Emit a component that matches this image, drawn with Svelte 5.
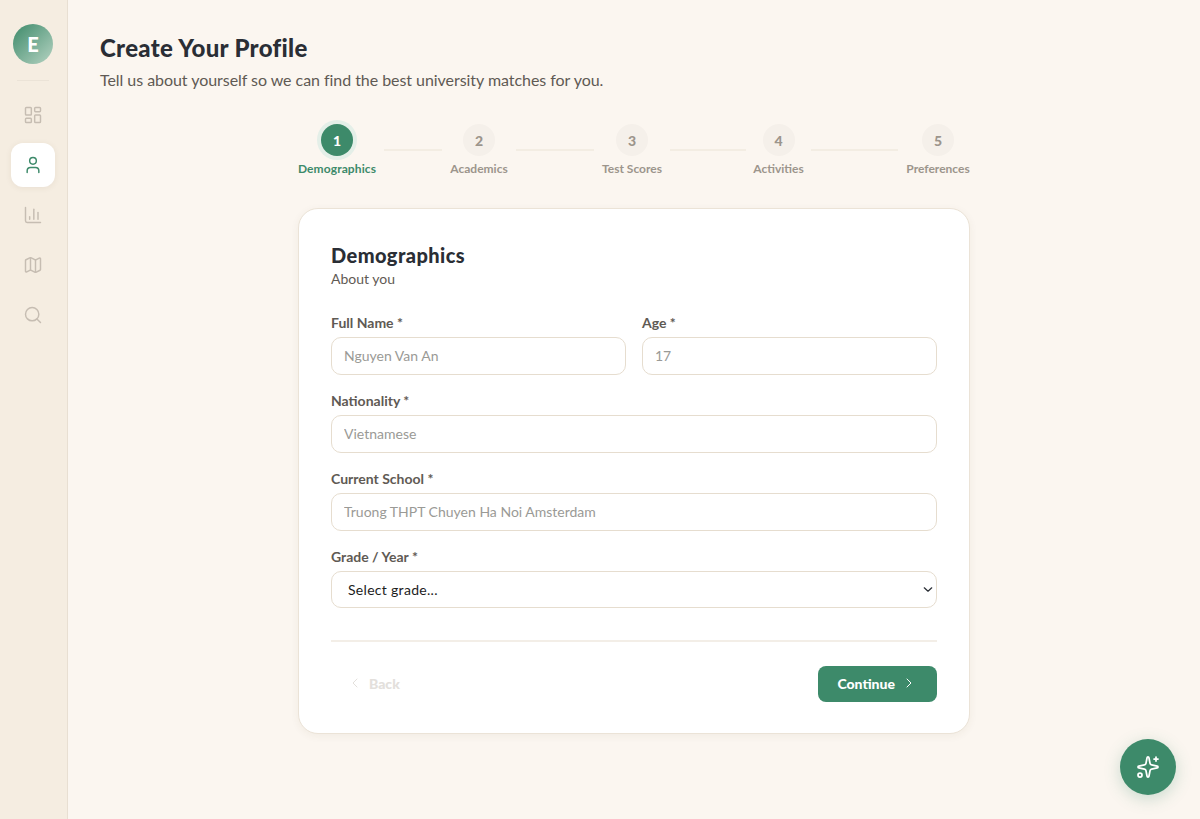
<script lang="ts">
	const steps = [
		{ n: 1, label: 'Demographics', active: true },
		{ n: 2, label: 'Academics' },
		{ n: 3, label: 'Test Scores' },
		{ n: 4, label: 'Activities' },
		{ n: 5, label: 'Preferences' }
	];
</script>

<div class="shell">
	<aside class="rail">
		<div class="avatar">E</div>
		<hr class="rail-sep" />
		<nav class="rail-nav">
			<a class="rail-item" href="#dash" aria-label="Dashboard">
				<svg viewBox="0 0 24 24"><rect x="3" y="3" width="7" height="9" rx="1" /><rect x="14" y="3" width="7" height="5" rx="1" /><rect x="14" y="12" width="7" height="9" rx="1" /><rect x="3" y="16" width="7" height="5" rx="1" /></svg>
			</a>
			<a class="rail-item rail-item--active" href="#profile" aria-label="Profile">
				<svg viewBox="0 0 24 24"><path d="M19 21v-2a4 4 0 0 0-4-4H9a4 4 0 0 0-4 4v2" /><circle cx="12" cy="7" r="4" /></svg>
			</a>
			<a class="rail-item" href="#stats" aria-label="Statistics">
				<svg viewBox="0 0 24 24"><path d="M3 3v16a2 2 0 0 0 2 2h16" /><path d="M18 17V9" /><path d="M13 17V5" /><path d="M8 17v-3" /></svg>
			</a>
			<a class="rail-item" href="#map" aria-label="Map">
				<svg viewBox="0 0 24 24"><path d="M14.106 5.553a2 2 0 0 0 1.788 0l3.659-1.83A1 1 0 0 1 21 4.619v12.764a1 1 0 0 1-.553.894l-4.553 2.277a2 2 0 0 1-1.788 0l-4.212-2.106a2 2 0 0 0-1.788 0l-3.659 1.83A1 1 0 0 1 3 19.381V6.618a1 1 0 0 1 .553-.894l4.553-2.277a2 2 0 0 1 1.788 0z" /><path d="M15 5.764v15" /><path d="M9 3.236v15" /></svg>
			</a>
			<a class="rail-item" href="#search" aria-label="Search">
				<svg viewBox="0 0 24 24"><circle cx="11" cy="11" r="8" /><path d="m21 21-4.3-4.3" /></svg>
			</a>
		</nav>
	</aside>

	<main class="main">
		<h1>Create Your Profile</h1>
		<p class="lede">Tell us about yourself so we can find the best university matches for you.</p>

		<div class="column">
			<ol class="stepper">
				{#each steps as step, i}
					{#if i > 0}
						<li class="step-line" aria-hidden="true"></li>
					{/if}
					<li class="step" class:step--active={step.active}>
						<span class="step-dot">{step.n}</span>
						<span class="step-label">{step.label}</span>
					</li>
				{/each}
			</ol>

			<form class="card">
				<h2>Demographics</h2>
				<p class="card-sub">About you</p>

				<div class="fields">
					<div class="row">
						<label class="field">
							<span>Full Name *</span>
							<input placeholder="Nguyen Van An" />
						</label>
						<label class="field">
							<span>Age *</span>
							<input placeholder="17" />
						</label>
					</div>
					<label class="field">
						<span>Nationality *</span>
						<input placeholder="Vietnamese" />
					</label>
					<label class="field">
						<span>Current School *</span>
						<input placeholder="Truong THPT Chuyen Ha Noi Amsterdam" />
					</label>
					<label class="field">
						<span>Grade / Year *</span>
						<div class="select-wrap">
							<select>
								<option>Select grade...</option>
							</select>
							<svg class="select-chevron" viewBox="0 0 12 8"><path d="M1.5 2l4.5 4 4.5-4" /></svg>
						</div>
					</label>
				</div>

				<div class="actions">
					<button type="button" class="btn btn--back" disabled>
						<svg viewBox="0 0 24 24"><path d="m15 18-6-6 6-6" /></svg>
						Back
					</button>
					<button type="button" class="btn btn--next">
						Continue
						<svg viewBox="0 0 24 24"><path d="m9 18 6-6-6-6" /></svg>
					</button>
				</div>
			</form>
		</div>
	</main>

	<button class="fab" aria-label="Open assistant">
		<svg viewBox="0 0 24 24"><path d="M11.017 2.814a1 1 0 0 1 1.966 0l1.051 5.558a2 2 0 0 0 1.594 1.594l5.558 1.051a1 1 0 0 1 0 1.966l-5.558 1.051a2 2 0 0 0-1.594 1.594l-1.051 5.558a1 1 0 0 1-1.966 0l-1.051-5.558a2 2 0 0 0-1.594-1.594l-5.558-1.051a1 1 0 0 1 0-1.966l5.558-1.051a2 2 0 0 0 1.594-1.594z" /><path d="M20 2v4" /><path d="M22 4h-4" /><circle cx="4" cy="20" r="2" /></svg>
	</button>
</div>

<style>
	:global(body) {
		background: #fbf6f0;
		font-family: Lato, 'Noto Sans', sans-serif;
		color: #2a2e35;
	}

	svg {
		fill: none;
		stroke: currentColor;
		stroke-width: 1.75;
		stroke-linecap: round;
		stroke-linejoin: round;
	}

	.shell {
		display: flex;
		min-height: 819px;
	}

	.rail {
		flex: none;
		box-sizing: border-box;
		width: 68px;
		background: #f5ede1;
		border-right: 1px solid #e8dfd2;
		display: flex;
		flex-direction: column;
		align-items: center;
		padding: 24px 1px 0 0;
	}

	.avatar {
		width: 40px;
		height: 40px;
		border-radius: 50%;
		background: linear-gradient(135deg, #3d8a6a, #b5d3c2);
		color: #fff;
		font-size: 20px;
		font-weight: 900;
		display: flex;
		align-items: center;
		justify-content: center;
	}

	.rail-sep {
		width: 32px;
		height: 1px;
		border: 0;
		margin: 16px 0 12px;
		background: #ebe3d7;
	}

	.rail-nav {
		display: flex;
		flex-direction: column;
		gap: 6px;
	}

	.rail-item {
		width: 44px;
		height: 44px;
		border-radius: 12px;
		display: flex;
		align-items: center;
		justify-content: center;
		color: #c6bdb2;
	}

	.rail-item svg {
		width: 20px;
		height: 20px;
	}

	.rail-item--active {
		background: #fff;
		color: #3d8a6a;
		box-shadow: 0 1px 6px rgb(90 70 40 / 0.08);
	}

	.main {
		flex: 1;
		min-width: 0;
		padding: 32px;
	}

	h1 {
		margin: 0;
		font-size: 24px;
		line-height: 32px;
		font-weight: 900;
		letter-spacing: 0.3px;
	}

	.lede {
		margin: 4px 0 0;
		font-size: 16px;
		line-height: 24px;
		color: #5f5a54;
		letter-spacing: -0.05px;
	}

	.column {
		width: 672px;
		margin: 32px auto 0;
	}

	.stepper {
		list-style: none;
		margin: 0;
		padding: 0;
		display: grid;
		grid-template-columns: 78px 58px 58px 78px 60px 76px 49px 87px 64px;
		column-gap: 8px;
	}

	.step {
		display: flex;
		flex-direction: column;
		align-items: center;
		gap: 5px;
	}

	.step-dot {
		width: 32px;
		height: 32px;
		border-radius: 50%;
		background: #f5f0ea;
		color: #9c958c;
		font-size: 14px;
		font-weight: 900;
		display: flex;
		align-items: center;
		justify-content: center;
	}

	.step-label {
		font-size: 12px;
		line-height: 16px;
		font-weight: 700;
		white-space: nowrap;
		color: #9c958c;
	}

	.step--active .step-dot {
		background: #3d8a6a;
		color: #fff;
		box-shadow: 0 0 0 4px #e4efe8;
	}

	.step--active .step-label {
		color: #3d8a6a;
		letter-spacing: 0.1px;
	}

	.step-line {
		height: 2px;
		margin-top: 25px;
		background: #f3ede3;
	}

	.card {
		box-sizing: border-box;
		margin-top: 31px;
		height: 526px;
		padding: 32px;
		background: #fff;
		border: 1px solid #ebe3d7;
		border-radius: 20px;
		box-shadow: 0 2px 8px rgb(90 70 40 / 0.06);
	}

	h2 {
		margin: 0;
		font-size: 20px;
		line-height: 28px;
		font-weight: 900;
		letter-spacing: 0.43px;
	}

	.card-sub {
		margin: 0;
		font-size: 14px;
		line-height: 20px;
		color: #5f5a54;
	}

	.fields {
		margin-top: 24px;
		display: flex;
		flex-direction: column;
		gap: 16px;
	}

	.row {
		display: grid;
		grid-template-columns: 1fr 1fr;
		gap: 16px;
	}

	.field {
		display: flex;
		flex-direction: column;
		gap: 4px;
		font-size: 14px;
		line-height: 20px;
		font-weight: 700;
		color: #5f5a54;
	}

	input,
	select {
		box-sizing: border-box;
		width: 100%;
		height: 38px;
		border: 1px solid #e6ddcf;
		border-radius: 10px;
		background: #fff;
		font: 400 14px/20px Lato, 'Noto Sans', sans-serif;
		outline: none;
	}

	input {
		padding: 0 12px 2px;
	}

	input::placeholder {
		color: #9a9a96;
		opacity: 1;
	}

	.select-wrap {
		position: relative;
		display: flex;
	}

	select {
		appearance: none;
		height: 37px;
		padding: 0 16px;
		color: #1c1c1c;
		letter-spacing: 0.3px;
	}

	.select-chevron {
		position: absolute;
		right: 4px;
		top: 15px;
		width: 10px;
		height: 7px;
		stroke: #2a2e35;
		stroke-width: 1.5;
	}

	.actions {
		margin-top: 32px;
		padding-top: 24px;
		border-top: 2px solid #f3eee7;
		display: flex;
		justify-content: space-between;
	}

	.btn {
		height: 36px;
		padding: 0 20px 2px 19px;
		border: 0;
		border-radius: 8px;
		display: flex;
		align-items: center;
		gap: 6px;
		font: 900 14px Lato, 'Noto Sans', sans-serif;
	}

	.btn svg {
		width: 16px;
		height: 16px;
		stroke-width: 1.5;
	}

	.btn--back {
		padding: 0 16px 2px;
		background: transparent;
		color: #e3e0dc;
	}

	.btn--next {
		background: #3d8a6a;
		color: #fff;
	}

	.fab {
		position: fixed;
		right: 24px;
		bottom: 24px;
		width: 56px;
		height: 56px;
		border: 0;
		border-radius: 50%;
		background: #3d8a6a;
		color: #fff;
		display: flex;
		align-items: center;
		justify-content: center;
		box-shadow: 0 4px 16px rgb(61 138 106 / 0.25);
	}

	.fab svg {
		width: 24px;
		height: 24px;
	}
</style>
